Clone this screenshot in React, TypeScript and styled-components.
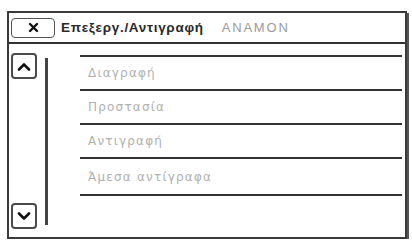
import React from 'react';
import styled, { createGlobalStyle } from 'styled-components';

const GlobalStyle = createGlobalStyle`
  html, body {
    margin: 0;
    padding: 0;
    background: #ffffff;
  }
  body {
    font-family: 'Liberation Sans', 'DejaVu Sans', sans-serif;
  }
`;

const Frame = styled.div`
  box-sizing: border-box;
  margin: 11px 0 0 7px;
  width: 400px;
  height: 228px;
  border: 2px solid #3a3a3a;
  box-shadow: 2px 2px 0 #555555;
  display: flex;
  flex-direction: column;
  background: #fff;
`;

const Header = styled.div`
  display: flex;
  align-items: center;
  height: 29px;
  padding-left: 2px;
  border-bottom: 2px solid #333333;
  flex-shrink: 0;
`;

const CloseButton = styled.button`
  box-sizing: border-box;
  width: 44px;
  height: 20px;
  padding: 0;
  border: 1.5px solid #555555;
  border-radius: 4px;
  background: #fff;
  display: flex;
  align-items: center;
  justify-content: center;
`;

const Title = styled.span`
  margin-left: 6px;
  font-size: 13.5px;
  font-weight: bold;
  color: #2a2a2a;
  letter-spacing: 0.7px;
`;

const Status = styled.span`
  margin-left: 18px;
  font-size: 13px;
  color: #9a9a9a;
  letter-spacing: 1.8px;
`;

const Body = styled.div`
  flex: 1;
  display: flex;
  padding: 9px 3px 8px 2px;
`;

const Side = styled.div`
  display: flex;
  flex-shrink: 0;
`;

const ArrowColumn = styled.div`
  display: flex;
  flex-direction: column;
  justify-content: space-between;
`;

const ArrowButton = styled.button`
  box-sizing: border-box;
  width: 26px;
  height: 26px;
  padding: 0;
  border: 2px solid #4a4a4a;
  border-radius: 4px;
  background: #fff;
  display: flex;
  align-items: center;
  justify-content: center;
`;

const ScrollTrack = styled.div`
  width: 3px;
  margin: 5px 0 4px 8px;
  background: #444444;
`;

const List = styled.ul`
  list-style: none;
  margin: 2px 0 0 32px;
  padding: 0;
  flex: 1;
  border-top: 2px solid #333333;
  align-self: flex-start;
`;

const Item = styled.li<{ $tall?: boolean }>`
  box-sizing: border-box;
  height: ${({ $tall }) => ($tall ? 37 : 34)}px;
  display: flex;
  align-items: center;
  padding-left: 8px;
  border-bottom: 2px solid #333333;
  font-family: 'DejaVu Sans', 'Liberation Sans', sans-serif;
  font-size: 12px;
  color: #b0b0b0;
  letter-spacing: 1.2px;
`;

const Chevron = ({ up }: { up?: boolean }) => (
  <svg width="14" height="9" viewBox="0 0 14 9">
    <path
      d={up ? 'M2 7.5 L7 2.5 L12 7.5' : 'M2 1.5 L7 6.5 L12 1.5'}
      fill="none"
      stroke="#111"
      strokeWidth="2.6"
      strokeLinecap="round"
      strokeLinejoin="round"
    />
  </svg>
);

const CrossIcon = () => (
  <svg width="11" height="11" viewBox="0 0 11 11">
    <path d="M2 2 L9 9 M9 2 L2 9" stroke="#111" strokeWidth="2.4" strokeLinecap="round" />
  </svg>
);

const items = ['Διαγραφή', 'Προστασία', 'Αντιγραφή', 'Άμεσα αντίγραφα'];

export default function App() {
  return (
    <>
      <GlobalStyle />
      <Frame>
        <Header>
          <CloseButton aria-label="Κλείσιμο">
            <CrossIcon />
          </CloseButton>
          <Title>Επεξεργ./Αντιγραφή</Title>
          <Status>ΑΝΑΜΟΝ</Status>
        </Header>
        <Body>
          <Side>
            <ArrowColumn>
              <ArrowButton aria-label="Πάνω">
                <Chevron up />
              </ArrowButton>
              <ArrowButton aria-label="Κάτω">
                <Chevron />
              </ArrowButton>
            </ArrowColumn>
            <ScrollTrack />
          </Side>
          <List>
            {items.map((label, idx) => (
              <Item key={label} $tall={idx === items.length - 1}>
                {label}
              </Item>
            ))}
          </List>
        </Body>
      </Frame>
    </>
  );
}
